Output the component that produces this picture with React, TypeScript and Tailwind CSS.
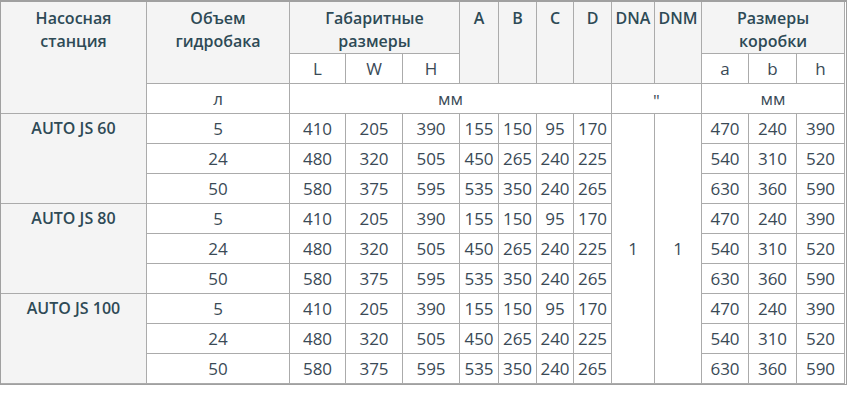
const groups = ["AUTO JS 60", "AUTO JS 80", "AUTO JS 100"];

const rows = [
  ["5", "410", "205", "390", "155", "150", "95", "170", "470", "240", "390"],
  ["24", "480", "320", "505", "450", "265", "240", "225", "540", "310", "520"],
  ["50", "580", "375", "595", "535", "350", "240", "265", "630", "360", "590"],
];

const line = "border-r border-b border-[#ababab]";
const head = `${line} bg-[#f4f4f4] text-center font-semibold text-[16px] leading-[23px] text-[#2e4a56] pt-[5px]`;
const sub = `${line} flex items-center justify-center text-[17px] text-[#3a4a56]`;
const td = `${line} text-center text-[17px] leading-[29px] text-[#3a4a56]`;

export default function App() {
  return (
    <div className="min-h-screen bg-white font-['Open_Sans',sans-serif]">
      <div className="grid w-[847px] grid-cols-[146px_143px_56px_57px_57px_39px_38px_37px_38px_43px_47px_47px_48px_48px] grid-rows-[52px_30px_30px_repeat(9,30px)] border-t-2 border-l border-r border-b border-[#a0a0a0]">
        <div className={`${head} row-span-3`}>
          Насосная
          <br />
          станция
        </div>
        <div className={`${head} row-span-2`}>
          Объем
          <br />
          гидробака
        </div>
        <div className={`${head} col-span-3`}>
          Габаритные
          <br />
          размеры
        </div>
        <div className={`${head} row-span-2`}>A</div>
        <div className={`${head} row-span-2`}>B</div>
        <div className={`${head} row-span-2`}>C</div>
        <div className={`${head} row-span-2`}>D</div>
        <div className={`${head} row-span-2`}>DNA</div>
        <div className={`${head} row-span-2`}>DNM</div>
        <div className={`${head} col-span-3`}>
          Размеры
          <br />
          коробки
        </div>

        <div className={sub}>L</div>
        <div className={sub}>W</div>
        <div className={sub}>H</div>
        <div className={sub}>a</div>
        <div className={sub}>b</div>
        <div className={sub}>h</div>

        <div className={`${sub} text-[15px]`}>л</div>
        <div className={`${sub} col-span-7 text-[15px]`}>мм</div>
        <div className={`${sub} col-span-2 items-start pt-[4px] text-[15px]`}>"</div>
        <div className={`${sub} col-span-3 text-[15px]`}>мм</div>

        {groups.map((name, g) => (
          <>
            <div key={name} className={`${line} row-span-3 bg-[#f4f4f4] text-center font-semibold text-[16px] leading-[29px] text-[#2e4a56]`}>
              {name}
            </div>
            {rows.map((r, i) => (
              <>
                {r.slice(0, 8).map((v, j) => (
                  <div key={`${g}-${i}-${j}`} className={td}>
                    {v}
                  </div>
                ))}
                {g === 0 && i === 0 && (
                  <>
                    <div className={`${sub} row-span-9`}>1</div>
                    <div className={`${sub} row-span-9`}>1</div>
                  </>
                )}
                {r.slice(8).map((v, j) => (
                  <div key={`${g}-${i}-b${j}`} className={td}>
                    {v}
                  </div>
                ))}
              </>
            ))}
          </>
        ))}
      </div>
    </div>
  );
}
